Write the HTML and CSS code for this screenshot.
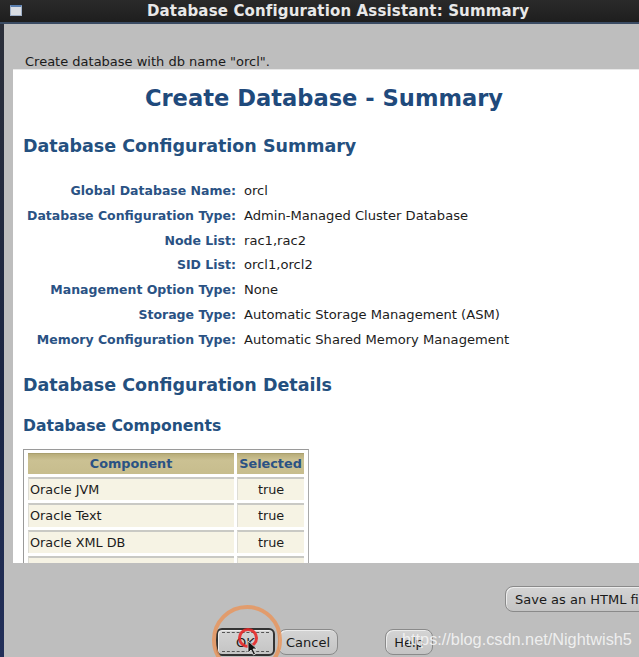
FILE: index.html
```html
<!DOCTYPE html>
<html>
<head>
<meta charset="utf-8">
<link rel="stylesheet" href="styles.css">
</head>
<body>
<div class="screen">
  <div class="titlebar">
    <span class="win-icon"></span>
    <span class="title">Database Configuration Assistant: Summary</span>
  </div>
  <div class="window">
    <div class="edge"></div>
    <div class="body">
      <div class="intro">Create database with db name "orcl".</div>
      <div class="panel">
        <h1 class="h-main">Create Database - Summary</h1>
        <h2 class="h-sec">Database Configuration Summary</h2>
        <div class="props">
          <div class="lbl">Global Database Name:</div><div class="val">orcl</div>
          <div class="lbl">Database Configuration Type:</div><div class="val">Admin-Managed Cluster Database</div>
          <div class="lbl">Node List:</div><div class="val">rac1,rac2</div>
          <div class="lbl">SID List:</div><div class="val">orcl1,orcl2</div>
          <div class="lbl">Management Option Type:</div><div class="val">None</div>
          <div class="lbl">Storage Type:</div><div class="val">Automatic Storage Management (ASM)</div>
          <div class="lbl">Memory Configuration Type:</div><div class="val">Automatic Shared Memory Management</div>
        </div>
        <h2 class="h-sec h-details">Database Configuration Details</h2>
        <h3 class="h-sub">Database Components</h3>
        <div class="tbl-wrap">
          <table class="comp">
            <thead>
              <tr><th class="c1">Component</th><th class="c2">Selected</th></tr>
            </thead>
            <tbody>
              <tr><td class="c1">Oracle JVM</td><td class="c2">true</td></tr>
              <tr><td class="c1">Oracle Text</td><td class="c2">true</td></tr>
              <tr><td class="c1">Oracle XML DB</td><td class="c2">true</td></tr>
              <tr><td class="c1">Oracle Multimedia</td><td class="c2">true</td></tr>
            </tbody>
          </table>
        </div>
      </div>
      <div class="footer">
        <div class="save-row"><span class="btn btn-save">Save as an HTML file</span></div>
        <div class="btn-row">
          <span class="btn btn-ok"><span class="ok-in">OK</span></span>
          <span class="btn btn-cancel">Cancel</span>
          <span class="btn btn-help">Help</span>
        </div>
      </div>
    </div>
  </div>
  <div class="ring-orange"></div>
  <div class="ring-red"></div>
  <svg class="cursor" width="12" height="16" viewBox="0 0 12 16"><path d="M1 1 L1 13 L4 10 L6.5 15 L8.5 14 L6 9 L10 9 Z" fill="#111" stroke="#eee" stroke-width="0.8"/></svg>
  <div class="watermark">https://blog.csdn.net/Nightwish5</div>
</div>
</body>
</html>
```
FILE: styles.css
```css
html, body { margin: 0; padding: 0; }
body { background: #bdbdbd; overflow: hidden; }
.screen { position: relative; width: 639px; height: 657px; overflow: hidden; font-family: "DejaVu Sans", sans-serif; }

.titlebar {
  height: 22px; background: linear-gradient(#2a2a2a, #1e1e1e);
  border-bottom: 2px solid #3a4b63;
  display: flex; align-items: center; position: relative;
}
.win-icon {
  position: absolute; left: 10px; top: 5px; width: 12px; height: 11px;
  background: #d9dde3; border-top: 2px solid #5a7fb0; box-sizing: border-box;
  border-left: 1px solid #9fb0c8; border-right: 1px solid #9fb0c8; border-bottom: 1px solid #9fb0c8;
}
.title { margin-left: 147px; color: #e8e8e8; font-weight: bold; font-size: 15px; letter-spacing: 0.15px; }

.window { display: flex; height: 633px; }
.edge { width: 4px; background: linear-gradient(#2b2f3a, #1a2544 60%, #23305a); flex: none; }
.body { flex: 1; background: #bebebe; display: flex; flex-direction: column; min-width: 0; }

.intro { font-size: 13px; color: #1a1a1a; padding: 30px 0 0 21px; height: 15px; line-height: 15px; }
.panel {
  margin-left: 9px; height: 494px; background: #fff; overflow: hidden;
  padding-left: 10px; box-sizing: border-box; border-top: 1px solid #e8e8e8;
}
.h-main { margin: 0; padding-top: 13px; line-height: 30px; font-size: 22.6px; font-weight: bold; color: #1f4a7c; text-align: center; width: 602px; }
.h-sec { margin: 21px 0 0; line-height: 24px; font-size: 17.5px; font-weight: bold; color: #24507f; }
.h-details { margin-top: 20px; }
.h-sub { margin: 18px 0 0; line-height: 22px; font-size: 15.6px; font-weight: bold; color: #24507f; }

.props { display: grid; grid-template-columns: 213px auto; column-gap: 8px; margin-top: 21px; }
.lbl, .val { height: 24.8px; line-height: 24.8px; white-space: nowrap; }
.lbl { text-align: right; font-weight: bold; color: #2a5284; font-size: 12.5px; }
.val { color: #1c1c1c; font-size: 13.1px; }

.tbl-wrap { margin-top: 12px; width: 286px; border: 1px solid #9a9a9a; border-right-color: #aaa; box-sizing: border-box; padding: 0 1px 0 1px; }
.comp { border-collapse: separate; border-spacing: 3px 3px; font-size: 12.8px; width: 100%; }
.comp th { background: linear-gradient(#b8ad7a, #cbc193 30%, #c7bd8d); height: 20px; padding: 0; color: #2a5284; font-weight: bold; border-top: 1px solid #a99f6e; }
.comp td { background: #f6f3e4; height: 21.5px; padding: 0 1px; color: #1c1c1c; border-top: 2px solid #c9c9c4; border-left: 1px solid #deddd5; }
.comp .c1 { width: 209px; text-align: left; }
.comp th.c1 { text-align: center; }
.comp .c2 { width: 64px; text-align: center; }

.footer { flex: 1; display: flex; flex-direction: column; }
.btn {
  display: inline-flex; align-items: center; justify-content: center; box-sizing: border-box;
  background: linear-gradient(#d4d4d4, #c4c4c4); border: 1px solid #8a8a8a; border-radius: 8px;
  font-size: 13px; color: #1a1a1a; white-space: nowrap;
  box-shadow: inset 1px 1px 0 #ececec;
}
.save-row { margin-top: 23px; padding-left: 501px; height: 26px; display: flex; }
.btn-save { height: 26px; padding: 0 9px; justify-content: flex-start; flex: none; }
.btn-row { margin-top: 16px; padding-left: 212px; display: flex; height: 27px; }
.btn-ok { width: 59px; height: 28px; border: 2px solid #333; border-radius: 6px; padding: 2px 4px; }
.ok-in { flex: 1; align-self: stretch; display: flex; align-items: center; justify-content: center; border-top: 1px dashed #555; border-bottom: 1px dashed #555; }
.btn-cancel { width: 60px; height: 26px; margin-left: 3px; margin-top: 1px; }
.btn-help { width: 48px; height: 26px; margin-left: 47px; margin-top: 1px; }

.ring-orange { position: absolute; left: 212px; top: 605px; width: 70px; height: 70px; border-radius: 50%; border: 4px solid rgba(232, 150, 95, 0.85); box-sizing: border-box; }
.ring-red { position: absolute; left: 238px; top: 628px; width: 20px; height: 20px; border-radius: 50%; border: 3px solid rgba(230, 40, 40, 0.9); box-sizing: border-box; }
.cursor { position: absolute; left: 247px; top: 640px; }
.watermark { position: absolute; left: 402px; top: 630px; font-family: "Liberation Sans", Arial, sans-serif; font-size: 16.3px; color: rgba(245, 245, 245, 0.9); white-space: nowrap; }
```
